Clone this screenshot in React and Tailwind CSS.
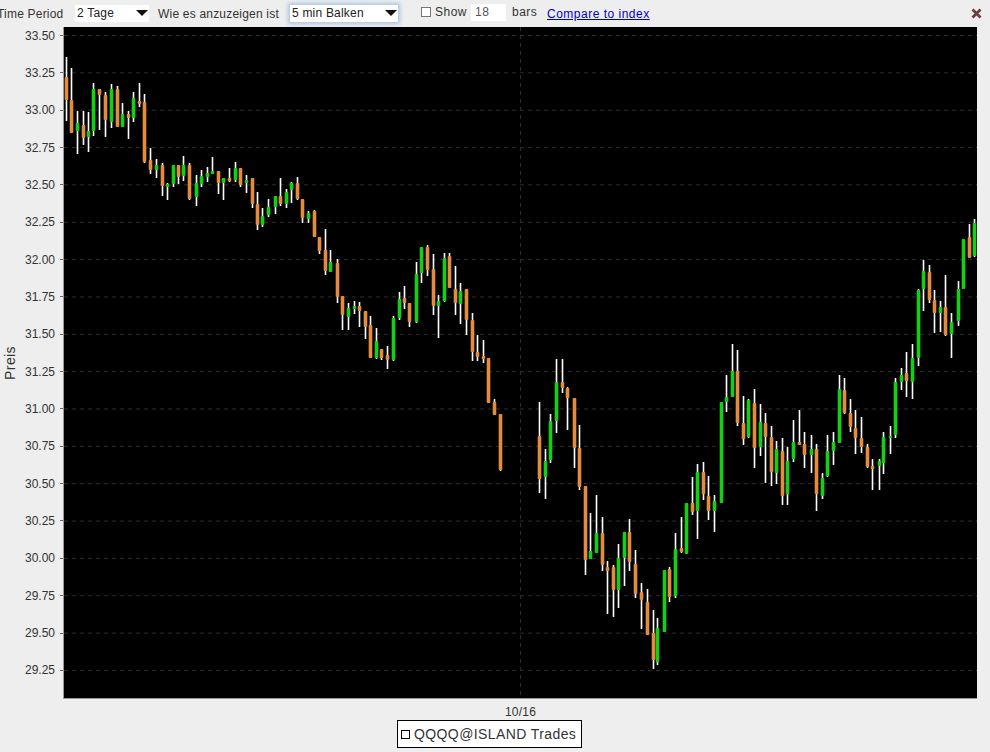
const FONT = { fontFamily: '"Liberation Sans", Arial, sans-serif' };

const PRICES = ['33.50', '33.25', '33.00', '32.75', '32.50', '32.25', '32.00', '31.75', '31.50', '31.25', '31.00', '30.75', '30.50', '30.25', '30.00', '29.75', '29.50', '29.25'];

// x, high, low, body top, body bottom, colour (o = down, g = up)
const BARS = [
  [66, 57, 121, 77, 100, 'o'], [71, 68, 133, 100, 133, 'o'], [77, 111, 154, 123, 131, 'g'], [83, 111, 145, 125, 138, 'o'],
  [88, 112, 152, 131, 137, 'g'], [93, 83, 136, 89, 131, 'g'], [99, 89, 130, 89, 95, 'o'], [105, 92, 137, 95, 120, 'o'],
  [111, 84, 128, 89, 122, 'g'], [117, 86, 127, 89, 127, 'o'], [122, 103, 127, 114, 127, 'g'], [128, 111, 139, 114, 118, 'o'],
  [133, 92, 122, 98, 118, 'g'], [139, 83, 107, 101, 104, 'o'], [144, 94, 163, 102, 162, 'o'], [150, 148, 174, 160, 170, 'o'],
  [156, 159, 178, 165, 170, 'g'], [162, 163, 196, 165, 186, 'o'], [167, 183, 200, 184, 187, 'g'], [173, 165, 187, 165, 184, 'g'],
  [178, 165, 184, 165, 177, 'o'], [183, 156, 181, 165, 176, 'g'], [189, 163, 200, 165, 199, 'o'], [196, 175, 206, 183, 197, 'g'],
  [201, 170, 187, 176, 184, 'g'], [207, 167, 182, 173, 177, 'g'], [212, 157, 174, 171, 174, 'g'], [218, 171, 194, 171, 183, 'o'],
  [223, 178, 200, 178, 183, 'g'], [229, 168, 182, 178, 181, 'o'], [235, 162, 182, 168, 180, 'g'], [240, 168, 187, 168, 185, 'o'],
  [246, 175, 193, 180, 183, 'g'], [252, 178, 208, 178, 204, 'o'], [257, 192, 230, 204, 225, 'o'], [262, 208, 227, 216, 225, 'g'],
  [268, 199, 217, 207, 215, 'g'], [275, 196, 214, 196, 207, 'g'], [280, 178, 206, 196, 204, 'o'], [286, 189, 208, 192, 204, 'g'],
  [291, 182, 203, 183, 190, 'g'], [297, 177, 200, 183, 199, 'o'], [302, 199, 223, 199, 218, 'o'], [308, 211, 223, 213, 219, 'g'],
  [314, 210, 237, 211, 237, 'o'], [319, 237, 254, 237, 251, 'o'], [325, 229, 275, 250, 271, 'o'], [330, 250, 272, 262, 272, 'g'],
  [337, 259, 303, 263, 297, 'o'], [342, 296, 330, 296, 315, 'o'], [348, 303, 330, 308, 317, 'g'], [354, 301, 314, 306, 309, 'g'],
  [359, 302, 327, 306, 311, 'o'], [365, 311, 339, 311, 327, 'o'], [370, 316, 358, 325, 358, 'o'], [376, 328, 359, 341, 358, 'g'],
  [381, 349, 360, 349, 358, 'o'], [387, 346, 369, 355, 360, 'o'], [393, 316, 361, 318, 360, 'g'], [399, 292, 320, 299, 318, 'g'],
  [404, 286, 309, 298, 303, 'o'], [409, 303, 327, 303, 322, 'o'], [416, 262, 323, 274, 322, 'g'], [421, 247, 283, 247, 273, 'g'],
  [427, 245, 276, 247, 270, 'o'], [433, 254, 315, 269, 306, 'o'], [438, 295, 338, 301, 306, 'g'], [444, 253, 302, 258, 301, 'g'],
  [449, 253, 288, 256, 288, 'o'], [455, 266, 315, 289, 303, 'o'], [460, 283, 324, 291, 304, 'g'], [466, 289, 335, 289, 320, 'o'],
  [472, 313, 361, 320, 352, 'o'], [477, 335, 361, 352, 357, 'o'], [483, 340, 363, 356, 359, 'o'], [488, 358, 403, 358, 403, 'o'],
  [494, 399, 415, 402, 415, 'o'], [500, 414, 471, 414, 470, 'o'],
  [539, 402, 493, 436, 479, 'o'], [545, 449, 499, 461, 477, 'g'], [550, 414, 463, 421, 460, 'g'], [556, 359, 433, 382, 421, 'g'],
  [562, 359, 393, 382, 388, 'o'], [567, 387, 430, 388, 398, 'o'], [574, 398, 468, 398, 448, 'o'], [579, 425, 490, 448, 487, 'o'],
  [585, 486, 575, 486, 560, 'o'], [590, 513, 559, 551, 559, 'g'], [596, 495, 553, 533, 553, 'g'], [602, 517, 571, 533, 565, 'o'],
  [607, 561, 614, 567, 571, 'o'], [613, 565, 617, 567, 590, 'o'], [618, 544, 608, 558, 590, 'g'], [624, 532, 586, 532, 558, 'g'],
  [629, 519, 571, 532, 562, 'o'], [635, 550, 598, 564, 594, 'o'], [641, 583, 629, 592, 600, 'o'], [647, 589, 635, 602, 635, 'o'],
  [653, 610, 669, 633, 660, 'o'], [657, 618, 665, 628, 662, 'g'], [664, 570, 632, 570, 632, 'g'], [669, 567, 602, 569, 597, 'o'],
  [675, 533, 598, 549, 596, 'g'], [681, 517, 553, 548, 552, 'o'], [686, 503, 554, 503, 554, 'g'], [692, 477, 515, 503, 512, 'o'],
  [697, 464, 539, 472, 511, 'g'], [703, 462, 500, 472, 494, 'o'], [708, 476, 520, 496, 511, 'o'], [714, 495, 532, 501, 511, 'g'],
  [721, 402, 503, 402, 503, 'g'], [726, 375, 412, 397, 402, 'g'], [732, 344, 397, 371, 397, 'g'], [737, 350, 426, 371, 423, 'o'],
  [743, 396, 445, 423, 439, 'o'], [748, 399, 438, 400, 437, 'g'], [754, 389, 468, 403, 448, 'o'], [760, 404, 456, 422, 447, 'g'],
  [765, 413, 483, 423, 437, 'o'], [771, 426, 486, 437, 472, 'o'], [776, 441, 484, 449, 473, 'g'], [782, 438, 505, 451, 496, 'o'],
  [787, 447, 505, 461, 494, 'g'], [793, 420, 462, 442, 459, 'g'], [799, 410, 445, 442, 445, 'o'], [804, 432, 468, 444, 455, 'o'],
  [811, 435, 473, 449, 455, 'g'], [816, 444, 511, 449, 494, 'o'], [822, 473, 499, 478, 496, 'g'], [827, 435, 477, 451, 476, 'g'],
  [833, 432, 465, 442, 451, 'g'], [839, 375, 443, 389, 443, 'g'], [844, 378, 414, 390, 413, 'o'], [850, 399, 432, 413, 427, 'o'],
  [855, 410, 454, 428, 438, 'o'], [861, 417, 453, 438, 447, 'o'], [867, 444, 468, 447, 467, 'o'], [872, 459, 490, 466, 469, 'o'],
  [879, 459, 490, 461, 466, 'g'], [883, 432, 474, 437, 463, 'g'], [890, 426, 454, 436, 438, 'g'], [895, 378, 438, 382, 435, 'g'],
  [901, 368, 390, 375, 382, 'g'], [906, 352, 397, 373, 381, 'o'], [912, 344, 399, 358, 382, 'g'], [918, 289, 366, 290, 358, 'g'],
  [923, 260, 311, 271, 289, 'g'], [929, 265, 303, 272, 300, 'o'], [934, 290, 333, 300, 313, 'o'], [940, 301, 332, 307, 313, 'g'],
  [945, 275, 336, 307, 335, 'o'], [951, 313, 358, 322, 334, 'g'], [958, 281, 326, 289, 321, 'g'], [963, 239, 289, 239, 289, 'g'],
  [969, 224, 258, 237, 258, 'o'], [974, 219, 257, 223, 256, 'g'],
];

function Combo({ label, className }) {
  return (
    <div className={`mt-[-1px] flex items-center justify-between bg-white pl-[2px] pr-[1px] text-[12px] tracking-[0.2px] text-[#222] ${className}`}>
      <span>{label}</span>
      <svg width="12" height="6" viewBox="0 0 12 6"><path d="M0 0h12L6 6z" fill="#111" /></svg>
    </div>
  );
}

function Toolbar() {
  return (
    <div className="flex h-[27px] shrink-0 items-center text-[12px] tracking-[0.5px] text-[#333] whitespace-nowrap">
      <span className="ml-[-3px] w-[78px] tracking-[0.2px]">Time Period</span>
      <Combo label="2 Tage" className="h-[17px] w-[74px] pl-[1px]" />
      <span className="ml-[9px] w-[132px] tracking-[0.2px]">Wie es anzuzeigen ist</span>
      <Combo label="5 min Balken" className="h-[17px] w-[108px] shadow-[0_0_4px_2px_#a9c6e6]" />
      <div className="ml-[23px] mt-[-3px] h-[10px] w-[10px] border border-[#777] bg-white" />
      <span className="ml-[4px] mt-[-3px] w-[36px]">Show</span>
      <div className="mt-[-3px] flex h-[17px] w-[35px] items-center bg-white pl-[4px] text-[#555]">18</div>
      <span className="ml-[6px] mt-[-3px] w-[35px]">bars</span>
      <a href="#" className="mt-[1px] text-[#0000c8] underline">Compare to index</a>
      <svg className="ml-auto mr-[8px]" width="11" height="11" viewBox="0 0 11 11">
        <path d="M1.5 1.5l8 8M9.5 1.5l-8 8" stroke="#6e3b3f" strokeWidth="2.8" />
      </svg>
    </div>
  );
}

function Chart() {
  // the picture's coordinates start at the plot's top-left corner
  return (
    <svg width="913" height="671" viewBox="64 27 913 671" className="block bg-black shrink-0">
      {PRICES.map((p, i) => (
        <line key={p} x1="64" x2="977" y1={35.5 + i * 37.35} y2={35.5 + i * 37.35} stroke="#2e2e2e" strokeDasharray="4 4" />
      ))}
      <line x1="520.5" x2="520.5" y1="27" y2="698" stroke="#2e2e2e" strokeDasharray="4 4" />
      {BARS.map(([x, hi, lo, top, bot, c]) => (
        <g key={x}>
          <rect x={x - 0.3} y={hi} width="1.6" height={lo - hi} fill="#fff" />
          <rect x={x - 1.3} y={top} width="3.6" height={Math.max(bot - top, 2)} rx="1" fill={c === 'o' ? '#e58a3e' : '#14d014'} />
        </g>
      ))}
    </svg>
  );
}

export default function App() {
  return (
    <div className="flex h-[752px] w-[990px] flex-col overflow-hidden bg-[#eeeeee]" style={FONT}>
      <Toolbar />
      <div className="flex h-[671px] shrink-0">
        <div className="flex w-[20px] items-center justify-center">
          <span className="rotate-180 text-[14px] tracking-[0.4px] text-[#333] [writing-mode:vertical-rl]">Preis</span>
        </div>
        <div className="w-[43px] pt-[8px]">
          {PRICES.map(p => (
            <div key={p} className="relative h-[37.35px]">
              <div className="flex h-[1px] items-center justify-end pr-[8px] text-[12px] text-[#333]">
                <span>{p}</span>
              </div>
              <div className="absolute right-0 top-0 h-[1px] w-[3px] bg-[#666]" />
            </div>
          ))}
        </div>
        <div className="w-[1px] bg-[#999]" />
        <Chart />
      </div>
      <div className="h-[1px] w-[914px] ml-[63px] bg-[#999]" />
      <div className="ml-[505px] mt-[5px] h-[16px] text-[12px] leading-[16px] tracking-[0.2px] text-[#333]">10/16</div>
      <div className="ml-[397px] h-[28px] w-[185px] flex items-center border border-black bg-white pl-[3px] text-[14px] tracking-[0.4px] text-[#333]">
        <div className="mr-[4px] h-[9px] w-[9px] border border-black" />
        <span className="whitespace-nowrap">QQQQ@ISLAND Trades</span>
      </div>
    </div>
  );
}
